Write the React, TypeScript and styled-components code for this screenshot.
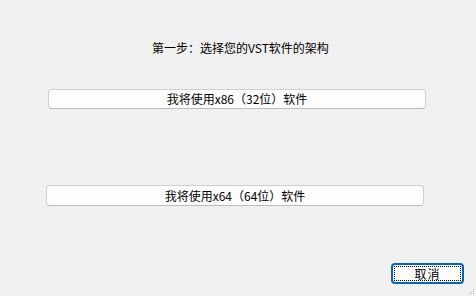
import React from 'react';
import styled, { createGlobalStyle } from 'styled-components';

const GlobalStyle = createGlobalStyle`
  html, body {
    margin: 0;
    padding: 0;
    background: #f0f0f0;
  }
  * {
    box-sizing: border-box;
  }
`;

const Dialog = styled.div`
  position: relative;
  width: 476px;
  height: 296px;
  background: #f0f0f0;
  display: flex;
  flex-direction: column;
  padding: 40px 12px 12px 0;
  font-family: 'Microsoft YaHei', 'Noto Sans CJK SC', sans-serif;
  font-size: 12px;
  color: #000;
`;

const Title = styled.div`
  height: 16px;
  line-height: 16px;
  padding-left: 152px;
  white-space: nowrap;
`;

const ChoiceButton = styled.button<{ $left: number; $top: number; $h: number }>`
  margin-top: ${(p) => p.$top}px;
  margin-left: ${(p) => p.$left}px;
  width: 378px;
  height: ${(p) => p.$h}px;
  padding: 0;
  background: #fdfdfd;
  border: 1px solid #d0d0d0;
  border-bottom-color: #bcbcbc;
  border-radius: 4px;
  font-family: inherit;
  font-size: 12px;
  line-height: 16px;
  color: #000;
  text-align: center;
`;

const Footer = styled.div`
  margin-top: auto;
  display: flex;
  justify-content: flex-end;
`;

const CancelButton = styled.button`
  width: 73px;
  height: 21px;
  padding: 0;
  background: #fdfdfd;
  border: 2px solid #0067c0;
  border-radius: 4px;
  display: flex;
  align-items: stretch;
  justify-content: stretch;
  font-family: inherit;
  font-size: 12px;
  color: #000;
`;

const FocusRing = styled.span`
  flex: 1;
  margin: 1px;
  border: 1px dotted #000;
  display: flex;
  align-items: center;
  justify-content: center;
  line-height: 14px;
  letter-spacing: 1px;
`;

const Grip = styled.svg`
  position: absolute;
  right: 1px;
  bottom: 1px;
`;

export default function App() {
  return (
    <>
      <GlobalStyle />
      <Dialog>
        <Title>第一步：选择您的VST软件的架构</Title>
        <ChoiceButton $left={48} $top={33} $h={20}>
          我将使用x86（32位）软件
        </ChoiceButton>
        <ChoiceButton $left={46} $top={76} $h={21}>
          我将使用x64（64位）软件
        </ChoiceButton>
        <Footer>
          <CancelButton>
            <FocusRing>取消</FocusRing>
          </CancelButton>
        </Footer>
        <Grip width="8" height="8" viewBox="0 0 8 8">
          <rect x="6" y="2" width="1" height="1" fill="#b8b8b8" />
          <rect x="4" y="4" width="1" height="1" fill="#b8b8b8" />
          <rect x="6" y="4" width="1" height="1" fill="#b8b8b8" />
          <rect x="2" y="6" width="1" height="1" fill="#b8b8b8" />
          <rect x="4" y="6" width="1" height="1" fill="#b8b8b8" />
          <rect x="6" y="6" width="1" height="1" fill="#b8b8b8" />
        </Grip>
      </Dialog>
    </>
  );
}
